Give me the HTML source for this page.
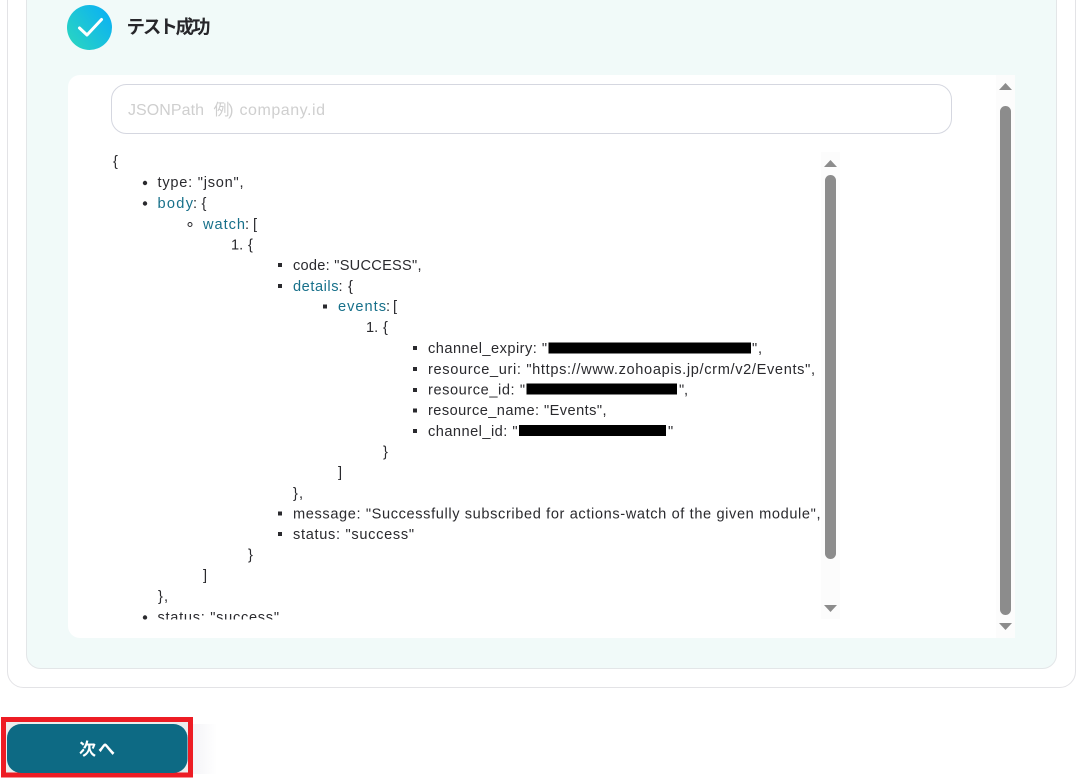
<!DOCTYPE html>
<html lang="ja">
<head>
<meta charset="utf-8">
<title>テスト成功</title>
<style>
html,body{margin:0;padding:0;background:#fff;width:1082px;height:778px;overflow:hidden}
svg{display:block;position:absolute;left:0;top:0}
text{font-family:"Liberation Sans","Noto Sans CJK JP",sans-serif;font-size:14.6px;fill:#2a2a2e}
.k{fill:#17708a}
</style>
</head>
<body>
<svg width="1082" height="778" viewBox="0 0 1082 778" xmlns="http://www.w3.org/2000/svg">
<defs>
<linearGradient id="g" x1="0" y1="1" x2="1" y2="0.25">
<stop offset="0" stop-color="#2cd8bd"/>
<stop offset="1" stop-color="#0cb2f2"/>
</linearGradient>
<linearGradient id="sh" x1="0" y1="0" x2="1" y2="0">
<stop offset="0" stop-color="#f4f4f7"/>
<stop offset="1" stop-color="#ffffff"/>
</linearGradient>
<clipPath id="c"><rect x="100" y="150" width="722" height="469.5"/></clipPath>
</defs>

<!-- outer card -->
<rect x="7.5" y="-40" width="1068" height="727.5" rx="16" fill="#fff" stroke="#e3e3e6"/>
<!-- teal panel -->
<rect x="26.5" y="-40" width="1030" height="708.5" rx="14" fill="#f1faf9" stroke="#e3e6e8"/>
<!-- white box -->
<path d="M80 75H1015V638H80a12 12 0 0 1-12-12V87a12 12 0 0 1 12-12Z" fill="#fff"/>

<!-- header -->
<circle cx="89.5" cy="27.5" r="22.5" fill="url(#g)"/>
<path d="M79.500 28L87 35L101.500 19.500" fill="none" stroke="#fff" stroke-width="3" stroke-linecap="round" stroke-linejoin="round"/>
<text x="126.500" y="33.500" textLength="84" style="font-size:18.500px;font-weight:700;fill:#27272b">テスト成功</text>

<!-- input -->
<rect x="111.5" y="84.5" width="840" height="49" rx="15" fill="#fff" stroke="#d5d7e0"/>
<text x="128" y="115" textLength="76" style="font-size:16px;fill:#cfcfcf">JSONPath</text>
<text x="213.500" y="115" textLength="20" style="font-size:16px;fill:#cfcfcf">例)</text>
<text x="239.500" y="115" textLength="85.500" style="font-size:16px;fill:#cfcfcf">company.id</text>

<!-- tree -->
<g clip-path="url(#c)">
<text x="113" y="166">{</text>

<circle cx="145" cy="183" r="2.200" fill="#2a2a2e"/>
<text x="157.5" y="187" textLength="86">type: "json",</text>

<circle cx="145" cy="203.500" r="2.200" fill="#2a2a2e"/>
<text x="157.5" y="208" class="k" textLength="35.500">body</text>
<text x="193" y="208">:</text>
<text x="201.500" y="208">{</text>

<circle cx="190" cy="224.500" r="2" fill="none" stroke="#2a2a2e"/>
<text x="203" y="229" class="k" textLength="42">watch</text>
<text x="245" y="229">:</text>
<text x="253" y="229">[</text>

<text x="231" y="249.5">1.</text>
<text x="248" y="249.5">{</text>

<rect x="278" y="263" width="4" height="4" fill="#2a2a2e"/>
<text x="293" y="270" textLength="128.500">code: "SUCCESS",</text>

<rect x="278" y="284" width="4" height="4" fill="#2a2a2e"/>
<text x="293" y="291" class="k" textLength="45.500">details</text>
<text x="338.500" y="291">:</text>
<text x="348" y="291">{</text>

<rect x="323" y="304.500" width="4" height="4" fill="#2a2a2e"/>
<text x="338" y="311" class="k" textLength="48">events</text>
<text x="386" y="311">:</text>
<text x="393" y="311">[</text>

<text x="366" y="332">1.</text>
<text x="383" y="332">{</text>

<rect x="413" y="346" width="4" height="4" fill="#2a2a2e"/>
<text x="428" y="353" textLength="119">channel_expiry: "</text>
<rect x="548.500" y="342.500" width="202.500" height="11" fill="#000"/>
<text x="752" y="353" textLength="10">",</text>

<rect x="413" y="367" width="4" height="4" fill="#2a2a2e"/>
<text x="428" y="374" textLength="387">resource_uri: "https://www.zohoapis.jp/crm/v2/Events",</text>

<rect x="413" y="388" width="4" height="4" fill="#2a2a2e"/>
<text x="428" y="394.500" textLength="97">resource_id: "</text>
<rect x="526.500" y="383.500" width="150.500" height="11" fill="#000"/>
<text x="679" y="394.500" textLength="9">",</text>

<rect x="413" y="408.500" width="4" height="4" fill="#2a2a2e"/>
<text x="428" y="415" textLength="178.500">resource_name: "Events",</text>

<rect x="413" y="429" width="4" height="4" fill="#2a2a2e"/>
<text x="428" y="436" textLength="89.500">channel_id: "</text>
<rect x="519" y="425" width="147" height="11" fill="#000"/>
<text x="668" y="436">"</text>

<text x="383" y="456.500">}</text>
<text x="338" y="477">]</text>
<text x="293" y="498" textLength="10">},</text>

<rect x="278" y="511.500" width="4" height="4" fill="#2a2a2e"/>
<text x="293" y="518.500" textLength="527.500">message: "Successfully subscribed for actions-watch of the given module",</text>

<rect x="278" y="532" width="4" height="4" fill="#2a2a2e"/>
<text x="293" y="539" textLength="121">status: "success"</text>

<text x="248" y="559.500">}</text>
<text x="203" y="580">]</text>
<text x="158" y="601" textLength="10">},</text>

<circle cx="145" cy="617.500" r="2.200" fill="#2a2a2e"/>
<text x="157.5" y="622" textLength="121.500">status: "success"</text>
</g>

<!-- inner scrollbar -->
<rect x="821" y="152" width="19" height="467" fill="#fcfcfc"/>
<rect x="825" y="175" width="11" height="384" rx="5.5" fill="#8c8c8c"/>
<path d="M830.500 160L837 167H824Z" fill="#8c8c8c"/>
<path d="M824 605H837L830.500 612Z" fill="#8c8c8c"/>

<!-- outer scrollbar -->
<rect x="996" y="75" width="19" height="563" fill="#fcfcfc"/>
<rect x="1000" y="106" width="11" height="509" rx="5.500" fill="#8c8c8c"/>
<path d="M1005.500 83L1012 90H999Z" fill="#8c8c8c"/>
<path d="M999 623H1012L1005.500 630Z" fill="#8c8c8c"/>

<!-- button -->
<rect x="193" y="724" width="24" height="50" fill="url(#sh)"/>
<rect x="3.500" y="719.500" width="187" height="55.500" fill="#eceded" stroke="#ed1c24" stroke-width="5"/>
<rect x="7" y="724" width="180.500" height="49" rx="14" fill="#0d6a84"/>
<text x="79" y="755" textLength="36" style="font-size:17px;font-weight:700;fill:#fff">次へ</text>
</svg>
</body>
</html>
